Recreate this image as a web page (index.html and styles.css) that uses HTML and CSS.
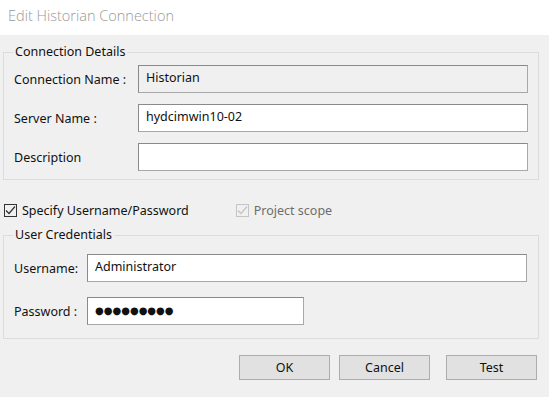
FILE: index.html
```html
<!DOCTYPE html>
<html lang="en">
<head>
    <meta charset="UTF-8">
    <meta name="viewport" content="width=device-width, initial-scale=1.0">
    <title>Edit Historian Connection</title>
    <link rel="stylesheet" href="styles.css">
</head>
<body>
    <div class="titlebar">Edit Historian Connection</div>
    <div class="dialog">
        <fieldset class="group details">
            <legend>Connection Details</legend>
            <div class="row">
                <span class="label">Connection Name :</span>
                <div class="field readonly">Historian</div>
            </div>
            <div class="row">
                <span class="label">Server Name :</span>
                <div class="field">hydcimwin10-02</div>
            </div>
            <div class="row">
                <span class="label">Description</span>
                <div class="field"></div>
            </div>
        </fieldset>

        <div class="options">
            <label class="check">
                <span class="box">
                    <svg width="11" height="11" viewBox="0 0 11 11"><path d="M1 5.5 L4 8.5 L10 1.5" fill="none" stroke="#333" stroke-width="1.2"/></svg>
                </span>
                Specify Username/Password
            </label>
            <label class="check disabled">
                <span class="box">
                    <svg width="11" height="11" viewBox="0 0 11 11"><path d="M1 5.5 L4 8.5 L10 1.5" fill="none" stroke="#c4c4c4" stroke-width="1.2"/></svg>
                </span>
                Project scope
            </label>
        </div>

        <fieldset class="group creds">
            <legend>User Credentials</legend>
            <div class="row">
                <span class="label">Username:</span>
                <div class="field">Administrator</div>
            </div>
            <div class="row">
                <span class="label">Password :</span>
                <div class="field short"><span class="dots">●●●●●●●●●</span></div>
            </div>
        </fieldset>

        <div class="buttons">
            <button class="ok">OK</button>
            <button>Cancel</button>
            <button class="test">Test</button>
        </div>
    </div>
</body>
</html>
```

FILE: styles.css
```css
body {
    margin: 0;
    background-color: #f0f0f0;
    font-family: "Noto Sans", "Open Sans", sans-serif;
    font-size: 12.5px;
    color: #111;
}
.titlebar {
    height: 35px;
    background-color: #fff;
    color: #999;
    font-family: "Open Sans", sans-serif;
    font-weight: 300;
    font-size: 14.5px;
    line-height: 32px;
    padding-left: 8px;
}
.dialog {
    padding-top: 9px;
}
.group {
    margin: 0 0 0 3px;
    width: 536px;
    box-sizing: border-box;
    border: 1px solid #dcdcdc;
    padding: 5px 10px 8px 10px;
}
.group legend {
    margin-left: -1px;
    padding: 0 2px;
    line-height: 16px;
}
.row {
    display: grid;
    align-items: center;
    margin-bottom: 11px;
}
.row:last-child {
    margin-bottom: 0;
}
.details .row {
    grid-template-columns: 124px 390px;
}
.creds .row {
    grid-template-columns: 73px 440px;
    margin-bottom: 15px;
}
.creds .row:last-child {
    margin-bottom: 0;
}
.field {
    height: 28px;
    box-sizing: border-box;
    background-color: #fff;
    border: 1px solid #8a8a8a;
    border-bottom-color: #a8a8a8;
    border-right-color: #a8a8a8;
    padding: 0 7px;
    line-height: 24px;
}
.field.readonly {
    background-color: #f0f0f0;
}
.field.short {
    width: 217px;
}
.dots {
    font-family: "DejaVu Sans", sans-serif;
    font-size: 10px;
    letter-spacing: 0;
}
.options {
    display: flex;
    align-items: center;
    height: 16px;
    margin: 22px 0 9px 4px;
}
.check {
    display: flex;
    align-items: center;
    gap: 5px;
}
.check .box {
    width: 13px;
    height: 13px;
    box-sizing: border-box;
    border: 1px solid #333;
    display: flex;
    align-items: center;
    justify-content: center;
}
.check.disabled {
    margin-left: 47px;
    color: #6d6d6d;
}
.check.disabled .box {
    border-color: #c4c4c4;
}
.creds {
    padding-top: 11px;
    padding-bottom: 13px;
}
.buttons {
    display: flex;
    margin: 16px 0 0 239px;
}
button {
    width: 91px;
    height: 25px;
    font-family: inherit;
    font-size: 12.5px;
    color: #111;
    background-color: #e1e1e1;
    border: 1px solid #adadad;
    padding: 0;
    margin-right: 9px;
}
button.test {
    margin-left: 7px;
}
```
